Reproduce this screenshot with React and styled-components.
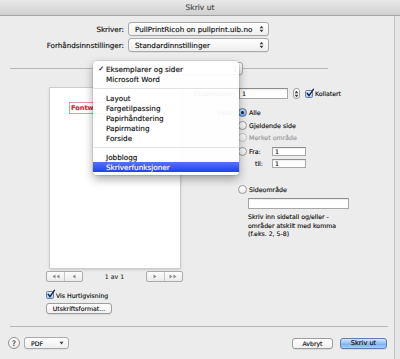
import React from "react";
import styled, { createGlobalStyle } from "styled-components";

const GlobalStyle = createGlobalStyle`
  html, body {
    margin: 0;
    padding: 0;
    background: #e6e6e6;
  }
  body {
    font-family: "DejaVu Sans", Verdana, sans-serif;
    color: #111;
  }
  * {
    box-sizing: border-box;
  }
`;

const Screen = styled.div`
  position: relative;
  width: 400px;
  height: 359px;
  overflow: hidden;
  background: #e6e6e6;
  -webkit-text-stroke: 0.15px currentColor;
`;

const TitleBar = styled.div`
  height: 16px;
  display: flex;
  align-items: center;
  justify-content: center;
  font-size: 7.5px;
  color: #4a4a4a;
  background: linear-gradient(#e9e9e9, #d0d0d0);
  border-bottom: 1px solid #a3a3a3;
`;

const Body = styled.div`
  display: flex;
  height: 343px;
`;

const Sheet = styled.div`
  width: 395px;
  background: #ececec;
  border-right: 1px solid #c3c3c3;
  display: flex;
  flex-direction: column;
`;

/* top printer / preset form */
const PrinterForm = styled.div`
  display: grid;
  grid-template-columns: 124px 141px;
  column-gap: 4px;
  row-gap: 2px;
  margin-top: 6px;
  align-items: center;
`;

const FormLabel = styled.span`
  text-align: right;
  font-size: 7.2px;
  white-space: nowrap;
`;

const Popup = styled.div`
  height: ${(p) => p.$h || 14}px;
  width: ${(p) => (p.$w ? `${p.$w}px` : "auto")};
  flex: 0 0 auto;
  display: flex;
  align-items: center;
  justify-content: space-between;
  padding: 0 4px 0 6px;
  font-size: ${(p) => p.$fs || 7.2}px;
  white-space: nowrap;
  background: linear-gradient(#ffffff, #eeeeee);
  border: 1px solid #a9a9a9;
  border-radius: 3px;
  box-shadow: 0 1px 0 rgba(0, 0, 0, 0.05);
`;

const Arrows = () => (
  <svg width="5" height="8" viewBox="0 0 5 8">
    <polygon points="0.6,3.2 2.5,0.8 4.4,3.2" fill="#3a3a3a" />
    <polygon points="0.6,4.8 2.5,7.2 4.4,4.8" fill="#3a3a3a" />
  </svg>
);

const SectionRow = styled.div`
  display: flex;
  align-items: center;
  margin-top: 10px;
  padding-left: 10px;
`;

const Rule = styled.div`
  height: 1px;
  flex: 0 0 ${(p) => p.$w}px;
  background: #b6b6b6;
`;

/* main area */
const Main = styled.div`
  display: flex;
  margin-top: 13px;
`;

const PreviewColumn = styled.div`
  width: 185px;
  flex: 0 0 185px;
  padding-left: 46px;
  display: flex;
  flex-direction: column;
  font-size: 6.2px;
`;

const Paper = styled.div`
  margin-left: 4px;
  width: 130px;
  height: 180px;
  background: #fff;
  box-shadow: 0 0 0 1px #cdcdcd, 0 1px 3px rgba(0, 0, 0, 0.25);
  padding: 14px 0 0 19px;
`;

const FontBox = styled.div`
  width: 80px;
  height: 12px;
  border: 1px solid #e59aa0;
  display: flex;
  align-items: center;
  padding-left: 1px;
  font-size: 6.6px;
  font-weight: bold;
  color: #cf2a3c;
`;

const NavRow = styled.div`
  display: flex;
  align-items: center;
  justify-content: space-between;
  width: 137px;
  height: 11px;
  margin-top: 3px;
`;

const NavGroup = styled.div`
  display: flex;
  width: 37px;
  height: 11px;
  border: 1px solid #aaaaaa;
  border-radius: 2px;
  background: linear-gradient(#fdfdfd, #ebebeb);
`;

const NavSeg = styled.div`
  flex: 1;
  display: flex;
  align-items: center;
  justify-content: center;
  & + & {
    border-left: 1px solid #c8c8c8;
  }
`;

const PageCount = styled.span`
  color: #333;
`;

const Tri = ({ dir = "left", count = 1 }) => (
  <svg width={count * 4} height="5" viewBox={`0 0 ${count * 4} 5`}>
    {Array.from({ length: count }).map((_, i) =>
      dir === "left" ? (
        <polygon key={i} points={`${i * 4 + 3.5},0.5 ${i * 4 + 3.5},4.5 ${i * 4 + 0.5},2.5`} fill="#8c8c8c" />
      ) : (
        <polygon key={i} points={`${i * 4 + 0.5},0.5 ${i * 4 + 0.5},4.5 ${i * 4 + 3.5},2.5`} fill="#8c8c8c" />
      )
    )}
  </svg>
);

const CheckRow = styled.label`
  display: flex;
  align-items: center;
  gap: 2px;
  height: 8px;
  margin-top: ${(p) => p.$mt || 0}px;
  font-size: ${(p) => p.$fs || 6.2}px;
  white-space: nowrap;
`;

const CheckBoxFrame = styled.span`
  position: relative;
  flex: 0 0 8px;
  width: 8px;
  height: 8px;
  border: 1px solid #6c7f9c;
  border-radius: 1.5px;
  background: linear-gradient(#e4eefb, #a9c7ef);
  svg {
    position: absolute;
    left: 0;
    top: -2px;
    overflow: visible;
  }
`;

const CheckBox = () => (
  <CheckBoxFrame>
    <svg width="8" height="8" viewBox="0 0 8 8">
      <path d="M1.2 4.2 L3 6.6 L7.4 0.4" fill="none" stroke="#1c2a55" strokeWidth="1.5" strokeLinecap="round" strokeLinejoin="round" />
    </svg>
  </CheckBoxFrame>
);

const PushButton = styled.div`
  height: 11px;
  width: ${(p) => p.$w}px;
  margin-top: ${(p) => p.$mt || 0}px;
  display: flex;
  align-items: center;
  justify-content: center;
  font-size: ${(p) => p.$fs || 6.2}px;
  white-space: nowrap;
  border: 1px solid ${(p) => (p.$primary ? "#5d7fb2" : "#9d9d9d")};
  border-radius: 3px;
  background: ${(p) =>
    p.$primary
      ? "linear-gradient(#d3e6fb, #8ebff3 50%, #74aeee 51%, #a7d0f7)"
      : "linear-gradient(#ffffff, #f1f1f1)"};
  box-shadow: 0 1px 0 rgba(0, 0, 0, 0.08);
`;

/* options on the right */
const OptionsPanel = styled.div`
  display: flex;
  flex-direction: column;
  font-size: 6.3px;
`;

const OptionRow = styled.div`
  display: grid;
  grid-template-columns: 50px auto;
  column-gap: 3px;
  align-items: center;
  height: ${(p) => p.$h || 12}px;
  margin-top: ${(p) => p.$mt || 0}px;
`;

const SideLabel = styled.span`
  text-align: right;
  white-space: nowrap;
`;

const Controls = styled.div`
  display: flex;
  align-items: center;
  white-space: nowrap;
  color: ${(p) => (p.$disabled ? "#9a9a9a" : "inherit")};
  padding-left: ${(p) => p.$pl || 0}px;
`;

const RadioDot = styled.span`
  position: relative;
  flex: 0 0 9px;
  width: 9px;
  height: 9px;
  margin-right: 2px;
  border-radius: 50%;
  border: 1px solid ${(p) => (p.$on ? "#5a76a6" : p.$disabled ? "#c4c4c4" : "#9a9a9a")};
  background: ${(p) =>
    p.$on ? "linear-gradient(#c8ddf7, #6fa3e6)" : "linear-gradient(#ffffff, #ececec)"};
  &::after {
    content: "";
    display: ${(p) => (p.$on ? "block" : "none")};
    position: absolute;
    left: 2px;
    top: 2px;
    width: 3px;
    height: 3px;
    border-radius: 50%;
    background: #1b2546;
  }
`;

const RangeTag = styled.span`
  width: ${(p) => p.$w}px;
  text-align: ${(p) => p.$align || "left"};
`;

const TextField = styled.div`
  width: ${(p) => p.$w}px;
  height: ${(p) => p.$h || 9}px;
  margin-left: ${(p) => p.$ml || 0}px;
  display: flex;
  align-items: center;
  padding-left: 2px;
  font-size: 6.2px;
  background: #fff;
  border: 1px solid #a8a8a8;
  border-top-color: #8e8e8e;
  box-shadow: inset 0 1px 1px rgba(0, 0, 0, 0.08);
`;

const Stepper = styled.span`
  display: flex;
  align-items: center;
  justify-content: center;
  width: 7px;
  height: 11px;
  margin: 0 5px 0 5px;
  border: 1px solid #a5a5a5;
  border-radius: 3px;
  background: linear-gradient(#ffffff, #ededed);
`;

const HelpText = styled.p`
  margin: 4px 0 0 63px;
  font-size: 6.2px;
  line-height: 8.5px;
`;

/* bottom bar */
const BottomRule = styled.div`
  height: 1px;
  margin: 12px 6px 0 10px;
  background: #b6b6b6;
`;

const BottomBar = styled.div`
  display: flex;
  align-items: center;
  height: 12px;
  margin-top: 10px;
  padding: 0 7px 0 8px;
  font-size: 6.2px;
`;

const HelpButton = styled.div`
  width: 12px;
  height: 12px;
  border-radius: 50%;
  border: 1px solid #8f8f8f;
  background: linear-gradient(#ffffff, #e9e9e9);
  display: flex;
  align-items: center;
  justify-content: center;
  font-size: 7.5px;
  color: #333;
  margin-right: 4px;
`;

const Spacer = styled.div`
  flex: ${(p) => (p.$w ? `0 0 ${p.$w}px` : "1")};
`;

/* pop-up menu lying over the sheet */
const Menu = styled.div`
  position: absolute;
  left: 93px;
  top: 61px;
  width: 146px;
  padding: 3px 0;
  background: rgba(255, 255, 255, 0.95);
  border-radius: 4px;
  box-shadow: 0 4px 10px rgba(0, 0, 0, 0.35), 0 0 0 1px rgba(0, 0, 0, 0.08);
  font-size: 7.25px;
`;

const MenuItem = styled.div`
  display: grid;
  grid-template-columns: 13px 1fr;
  align-items: center;
  height: 10px;
  white-space: nowrap;
  color: ${(p) => (p.$active ? "#fff" : "#111")};
  background: ${(p) => (p.$active ? "linear-gradient(#5573f6, #2440e8)" : "transparent")};
`;

const Tick = styled.span`
  justify-self: end;
  padding-right: 2px;
  font-size: 7px;
`;

const MenuSeparator = styled.div`
  height: 9px;
  display: flex;
  align-items: center;
  &::before {
    content: "";
    flex: 1;
    height: 1px;
    background: #e1e1e1;
  }
`;

const menuGroups = [
  ["Eksemplarer og sider", "Microsoft Word"],
  ["Layout", "Fargetilpassing", "Papirhåndtering", "Papirmating", "Forside"],
  ["Jobblogg", "Skriverfunksjoner"],
];

const App = () => {
  return (
    <Screen>
      <GlobalStyle />
      <TitleBar>Skriv ut</TitleBar>
      <Body>
        <Sheet>
          <PrinterForm>
            <FormLabel>Skriver:</FormLabel>
            <Popup>
              PullPrintRicoh on pullprint.uib.no
              <Arrows />
            </Popup>
            <FormLabel>Forhåndsinnstillinger:</FormLabel>
            <Popup>
              Standardinnstillinger
              <Arrows />
            </Popup>
          </PrinterForm>

          <SectionRow>
            <Rule $w={90} />
            <Popup $w={143} $h={13}>
              Eksemplarer og sider
              <Arrows />
            </Popup>
            <Rule $w={85} />
          </SectionRow>

          <Main>
            <PreviewColumn>
              <Paper>
                <FontBox>Fontw</FontBox>
              </Paper>
              <NavRow>
                <NavGroup>
                  <NavSeg>
                    <Tri dir="left" count={2} />
                  </NavSeg>
                  <NavSeg>
                    <Tri dir="left" />
                  </NavSeg>
                </NavGroup>
                <PageCount>1 av 1</PageCount>
                <NavGroup>
                  <NavSeg>
                    <Tri dir="right" />
                  </NavSeg>
                  <NavSeg>
                    <Tri dir="right" count={2} />
                  </NavSeg>
                </NavGroup>
              </NavRow>
              <CheckRow $mt={9}>
                <CheckBox />
                Vis Hurtigvisning
              </CheckRow>
              <PushButton $w={66} $mt={4}>
                Utskriftsformat...
              </PushButton>
            </PreviewColumn>

            <OptionsPanel>
              <OptionRow $h={11}>
                <SideLabel>Eksemplarer:</SideLabel>
                <Controls>
                  <TextField $w={49} $h={11} $ml={1}>
                    1
                  </TextField>
                  <Stepper>
                    <Arrows />
                  </Stepper>
                  <CheckRow>
                    <CheckBox />
                    Kollatert
                  </CheckRow>
                </Controls>
              </OptionRow>
              <OptionRow $mt={7}>
                <SideLabel>Sider:</SideLabel>
                <Controls>
                  <RadioDot $on />
                  Alle
                </Controls>
              </OptionRow>
              <OptionRow $mt={1}>
                <span />
                <Controls>
                  <RadioDot />
                  Gjeldende side
                </Controls>
              </OptionRow>
              <OptionRow>
                <span />
                <Controls $disabled>
                  <RadioDot $disabled />
                  Merket område
                </Controls>
              </OptionRow>
              <OptionRow $mt={2}>
                <span />
                <Controls>
                  <RadioDot />
                  <RangeTag $w={23}>Fra:</RangeTag>
                  <TextField $w={34}>1</TextField>
                </Controls>
              </OptionRow>
              <OptionRow>
                <span />
                <Controls>
                  <RangeTag $w={25} $align="right">
                    til:
                  </RangeTag>
                  <TextField $w={34} $ml={9}>
                    1
                  </TextField>
                </Controls>
              </OptionRow>
              <OptionRow $mt={14}>
                <span />
                <Controls>
                  <RadioDot />
                  Sideområde
                </Controls>
              </OptionRow>
              <OptionRow $h={11} $mt={3}>
                <span />
                <Controls $pl={10}>
                  <TextField $w={101} $h={11} />
                </Controls>
              </OptionRow>
              <HelpText>
                Skriv inn sidetall og/eller -
                <br />
                områder atskilt med komma
                <br />
                (f.eks. 2, 5-8)
              </HelpText>
            </OptionsPanel>
          </Main>

          <BottomRule />
          <BottomBar>
            <HelpButton>?</HelpButton>
            <Popup $w={45} $h={12} $fs={6.2}>
              PDF
              <svg width="5" height="4" viewBox="0 0 5 4">
                <polygon points="0.5,0.8 4.5,0.8 2.5,3.4" fill="#3a3a3a" />
              </svg>
            </Popup>
            <Spacer />
            <PushButton $w={41}>Avbryt</PushButton>
            <Spacer $w={7} />
            <PushButton $w={47} $primary $fs={6.6}>
              Skriv ut
            </PushButton>
          </BottomBar>
        </Sheet>
      </Body>

      <Menu>
        {menuGroups.map((group, gi) => (
          <React.Fragment key={gi}>
            {gi > 0 && <MenuSeparator />}
            {group.map((label) => (
              <MenuItem key={label} $active={label === "Skriverfunksjoner"}>
                <Tick>{label === "Eksemplarer og sider" ? "✓" : ""}</Tick>
                {label}
              </MenuItem>
            ))}
          </React.Fragment>
        ))}
      </Menu>
    </Screen>
  );
};

export default App;
